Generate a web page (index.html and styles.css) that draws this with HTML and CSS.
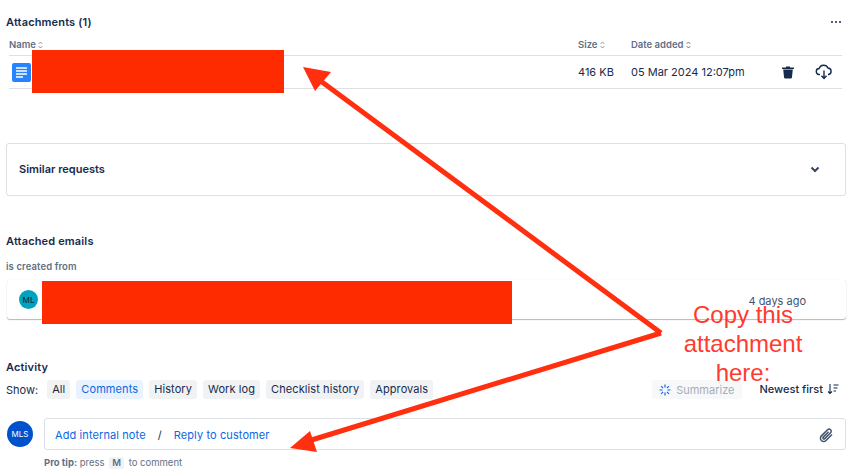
FILE: index.html
```html
<!DOCTYPE html>
<html lang="en">
<head>
    <meta charset="UTF-8">
    <title>Request attachments</title>
    <link rel="stylesheet" href="styles.css">
</head>
<body>
    <div class="page">
        <section class="attachments">
            <div class="title-row">
                <h2>Attachments (1)</h2>
                <span class="more"><i></i><i></i><i></i></span>
            </div>
            <div class="table-head">
                <span class="col-name">Name
                    <svg class="sort" width="5" height="8" viewBox="0 0 5 8"><path d="M.8 2.800 2.500 1l1.700 1.800M.8 5.200 2.500 7l1.700-1.800" fill="none" stroke="#8590a2"/></svg>
                </span>
                <span class="col-size">Size
                    <svg class="sort" width="5" height="8" viewBox="0 0 5 8"><path d="M.8 2.800 2.500 1l1.700 1.800M.8 5.200 2.500 7l1.700-1.800" fill="none" stroke="#8590a2"/></svg>
                </span>
                <span class="col-date">Date added
                    <svg class="sort" width="5" height="8" viewBox="0 0 5 8"><path d="M.8 2.800 2.500 1l1.700 1.800M.8 5.200 2.500 7l1.700-1.800" fill="none" stroke="#626f86"/></svg>
                </span>
            </div>
            <div class="table-row">
                <span class="col-name">
                    <svg class="doc-icon" width="19" height="19" viewBox="0 0 19 19">
                        <rect width="19" height="19" rx="2" fill="#2684ff"/>
                        <path d="M4 5h11M4 8h11M4 11h11M4 14h7" stroke="#fff" stroke-width="1.300"/>
                    </svg>
                </span>
                <span class="col-size">416 KB</span>
                <span class="col-date">05 Mar 2024 12:07pm</span>
                <span class="col-actions">
                    <svg width="16" height="16" viewBox="0 0 16 16">
                        <path d="M2 3.500h12v1.600H2zM6 2.400h4v1.200H6z" fill="#172b4d"/>
                        <path d="M3.200 5.600h9.600l-.9 8.200a1 1 0 0 1-1 .8H5.100a1 1 0 0 1-1-.8z" fill="#172b4d"/>
                    </svg>
                    <svg width="18" height="16" viewBox="0 0 18 16">
                        <path d="M5 10.500H4.500a3 3 0 0 1-.4-6A4.800 4.800 0 0 1 13 4a3.300 3.300 0 0 1 .6 6.500H13" fill="none" stroke="#172b4d" stroke-width="1.400"/>
                        <path d="M9 6.500v7.500M6.500 11.800 9 14.500l2.500-2.700" fill="none" stroke="#172b4d" stroke-width="1.400"/>
                    </svg>
                </span>
            </div>
        </section>

        <section class="similar">
            <span>Similar requests</span>
            <svg width="12" height="12" viewBox="0 0 12 12">
                <path d="M2.500 4.500 6 8l3.500-3.500" fill="none" stroke="#344563" stroke-width="2"/>
            </svg>
        </section>

        <section class="emails">
            <h2>Attached emails</h2>
            <div class="created-from">is created from</div>
            <div class="email-card">
                <span class="email-avatar">ML</span>
                <span class="email-age">4 days ago</span>
            </div>
        </section>

        <section class="activity">
            <h2>Activity</h2>
            <div class="filter-row">
                <span class="show-label">Show:</span>
                <span class="chip">All</span>
                <span class="chip chip-active">Comments</span>
                <span class="chip">History</span>
                <span class="chip">Work log</span>
                <span class="chip">Checklist history</span>
                <span class="chip">Approvals</span>
                <span class="summarize">
                    <svg width="12" height="12" viewBox="0 0 12 12">
                        <path d="M6 .5v3M6 8.500v3M.5 6h3M8.500 6h3M2.100 2.100l2 2M7.900 7.900l2 2M9.900 2.100l-2 2M4.100 7.900l-2 2" stroke="#0c66e4" stroke-width="1.200"/>
                    </svg>
                    Summarize
                </span>
                <span class="newest">
                    Newest first
                    <svg width="12" height="12" viewBox="0 0 12 12">
                        <path d="M3 1v9.500M1 8.500l2 2 2-2M6.500 2h5M6.500 5h4M6.500 8h2.500" fill="none" stroke="#172b4d" stroke-width="1.100"/>
                    </svg>
                </span>
            </div>
            <div class="comment-row">
                <span class="avatar">MLS</span>
                <div class="comment-main">
                    <div class="comment-box">
                        <a>Add internal note</a>
                        <span class="slash">/</span>
                        <a>Reply to customer</a>
                        <svg class="clip" width="18" height="18" viewBox="0 0 18 18">
                            <path d="M15 8.500 9 14.500a3.200 3.200 0 0 1-4.600-4.600l6.200-6.200a2.100 2.100 0 0 1 3 3L7.700 12.600a1 1 0 0 1-1.500-1.500l5.400-5.400" fill="none" stroke="#44546f" stroke-width="1.500"/>
                        </svg>
                    </div>
                    <div class="pro-tip"><b>Pro tip:</b> press <kbd>M</kbd> to comment</div>
                </div>
            </div>
        </section>
    </div>

    <!-- annotations drawn on top of the screenshot -->
    <div class="redact redact-file"></div>
    <div class="redact redact-email"></div>
    <svg class="arrows" width="857" height="472" viewBox="0 0 857 472">
        <path d="M661 333 318 79M661 333 305 442" fill="none" stroke="#ff2f0f" stroke-width="5"/>
        <path d="M303 67 331 72 315 91zM290 448 310 431 317 452z" fill="#ff2f0f"/>
    </svg>
    <div class="note">Copy this attachment here:</div>
</body>
</html>
```

FILE: styles.css
```css
body {
    margin: 0;
    background-color: #ffffff;
    color: #172b4d;
    font-family: Inter, "Liberation Sans", sans-serif;
    font-size: 11px;
    overflow: hidden;
}

h2 {
    margin: 0;
    font-size: 11px;
    line-height: 14px;
    font-weight: 600;
    letter-spacing: .15px;
}

.page {
    width: 840px;
    margin-left: 6px;
}

/* attachments table */
.attachments {
    padding-top: 15px;
}

.title-row {
    display: flex;
    justify-content: space-between;
    align-items: center;
    height: 14px;
}

.more {
    display: flex;
    gap: 2px;
    margin-right: 5px;
}

.more i {
    width: 2px;
    height: 2px;
    border-radius: 50%;
    background-color: #172b4d;
}

.table-head, .table-row {
    display: flex;
    align-items: center;
    margin-left: 3px;
    margin-right: 4px;
}

.table-head {
    height: 18px;
    margin-top: 6px;
    padding-bottom: 2px;
    color: #626f86;
    font-size: 9.500px;
    font-weight: 600;
    border-bottom: 1px solid #dcdfe4;
}

.sort {
    vertical-align: -1px;
}

.table-row {
    height: 32px;
    font-size: 11px;
    border-bottom: 1px solid #dcdfe4;
}

.col-name {
    width: 569px;
}

.col-size {
    width: 53px;
}

.col-date {
    width: 149px;
}

.doc-icon {
    display: block;
    margin-left: 3px;
}

.col-actions {
    display: flex;
    align-items: center;
    gap: 19px;
}

/* similar requests */
.similar {
    display: flex;
    justify-content: space-between;
    align-items: center;
    box-sizing: border-box;
    height: 53px;
    margin-top: 54px;
    padding: 0 24px 2px 12px;
    border: 1px solid #dcdfe4;
    border-radius: 3px;
    font-weight: 600;
}

/* attached emails */
.emails {
    margin-top: 38px;
}

.created-from {
    margin-top: 13px;
    color: #626f86;
    font-size: 9.500px;
    line-height: 12px;
    font-weight: 600;
    letter-spacing: .1px;
}

.email-card {
    display: flex;
    align-items: center;
    justify-content: space-between;
    box-sizing: border-box;
    height: 39px;
    margin-top: 7px;
    margin-left: 1px;
    padding: 0 40px 0 12px;
    border-radius: 3px;
    box-shadow: 0 1px 1px rgba(9, 30, 66, 0.3), 0 0 1px rgba(9, 30, 66, 0.15);
    color: #44546f;
}

.email-age {
    margin-top: 2px;
}

.email-avatar {
    display: flex;
    align-items: center;
    justify-content: center;
    width: 19px;
    height: 19px;
    border-radius: 50%;
    background-color: #00a3bf;
    color: #172b4d;
    font-size: 8px;
    font-weight: 500;
}

/* activity */
.activity {
    margin-top: 41px;
}

.filter-row {
    display: flex;
    align-items: center;
    margin-top: 6px;
    height: 19px;
}

.show-label {
    margin-right: 9px;
}

.chip {
    margin-right: 6px;
    padding: 0 5px;
    line-height: 19px;
    border-radius: 3px;
    background-color: #f1f2f4;
    font-size: 11px;
    letter-spacing: .09px;
}

.chip-active {
    background-color: #e9f2ff;
    color: #0c66e4;
}

.summarize {
    display: flex;
    align-items: center;
    gap: 5px;
    height: 19px;
    margin-left: auto;
    padding: 0 7px;
    border-radius: 3px;
    background-color: #f7f8f9;
    color: #a5adba;
}

.newest {
    display: flex;
    align-items: center;
    gap: 4px;
    margin-left: 18px;
    margin-right: 7px;
    margin-bottom: 1px;
    font-weight: 500;
}

.comment-row {
    display: flex;
    margin-top: 19px;
}

.avatar {
    display: flex;
    align-items: center;
    justify-content: center;
    flex: none;
    width: 26px;
    height: 26px;
    margin: 3px 11px 0 1px;
    border-radius: 50%;
    background-color: #0052cc;
    color: #ffffff;
    font-size: 8px;
}

.comment-main {
    flex: 1;
}

.comment-box {
    display: flex;
    align-items: center;
    box-sizing: border-box;
    height: 32px;
    padding: 1px 10px 0;
    border: 1px solid #dcdfe4;
    border-radius: 3px;
    color: #0c66e4;
    letter-spacing: .1px;
}

.slash {
    margin: 0 12px;
    color: #172b4d;
}

.clip {
    margin-left: auto;
}

.pro-tip {
    margin-top: 7px;
    color: #626f86;
    font-size: 9.500px;
    line-height: 12px;
}

kbd {
    display: inline-block;
    padding: 0 3px;
    border-radius: 2px;
    background-color: #f1f2f4;
    font-family: inherit;
    font-weight: 600;
    margin: 0 2px;
}

/* annotations */
.redact {
    position: absolute;
    background-color: #ff2b00;
}

.redact-file {
    left: 32px;
    top: 50px;
    width: 252px;
    height: 43px;
}

.redact-email {
    left: 42px;
    top: 281px;
    width: 470px;
    height: 43px;
}

.arrows {
    position: absolute;
    left: 0;
    top: 0;
}

.note {
    position: absolute;
    left: 673px;
    top: 300px;
    width: 140px;
    color: #ff3b30;
    font-family: "Liberation Sans", sans-serif;
    font-size: 24px;
    line-height: 29px;
    text-align: center;
}
```
